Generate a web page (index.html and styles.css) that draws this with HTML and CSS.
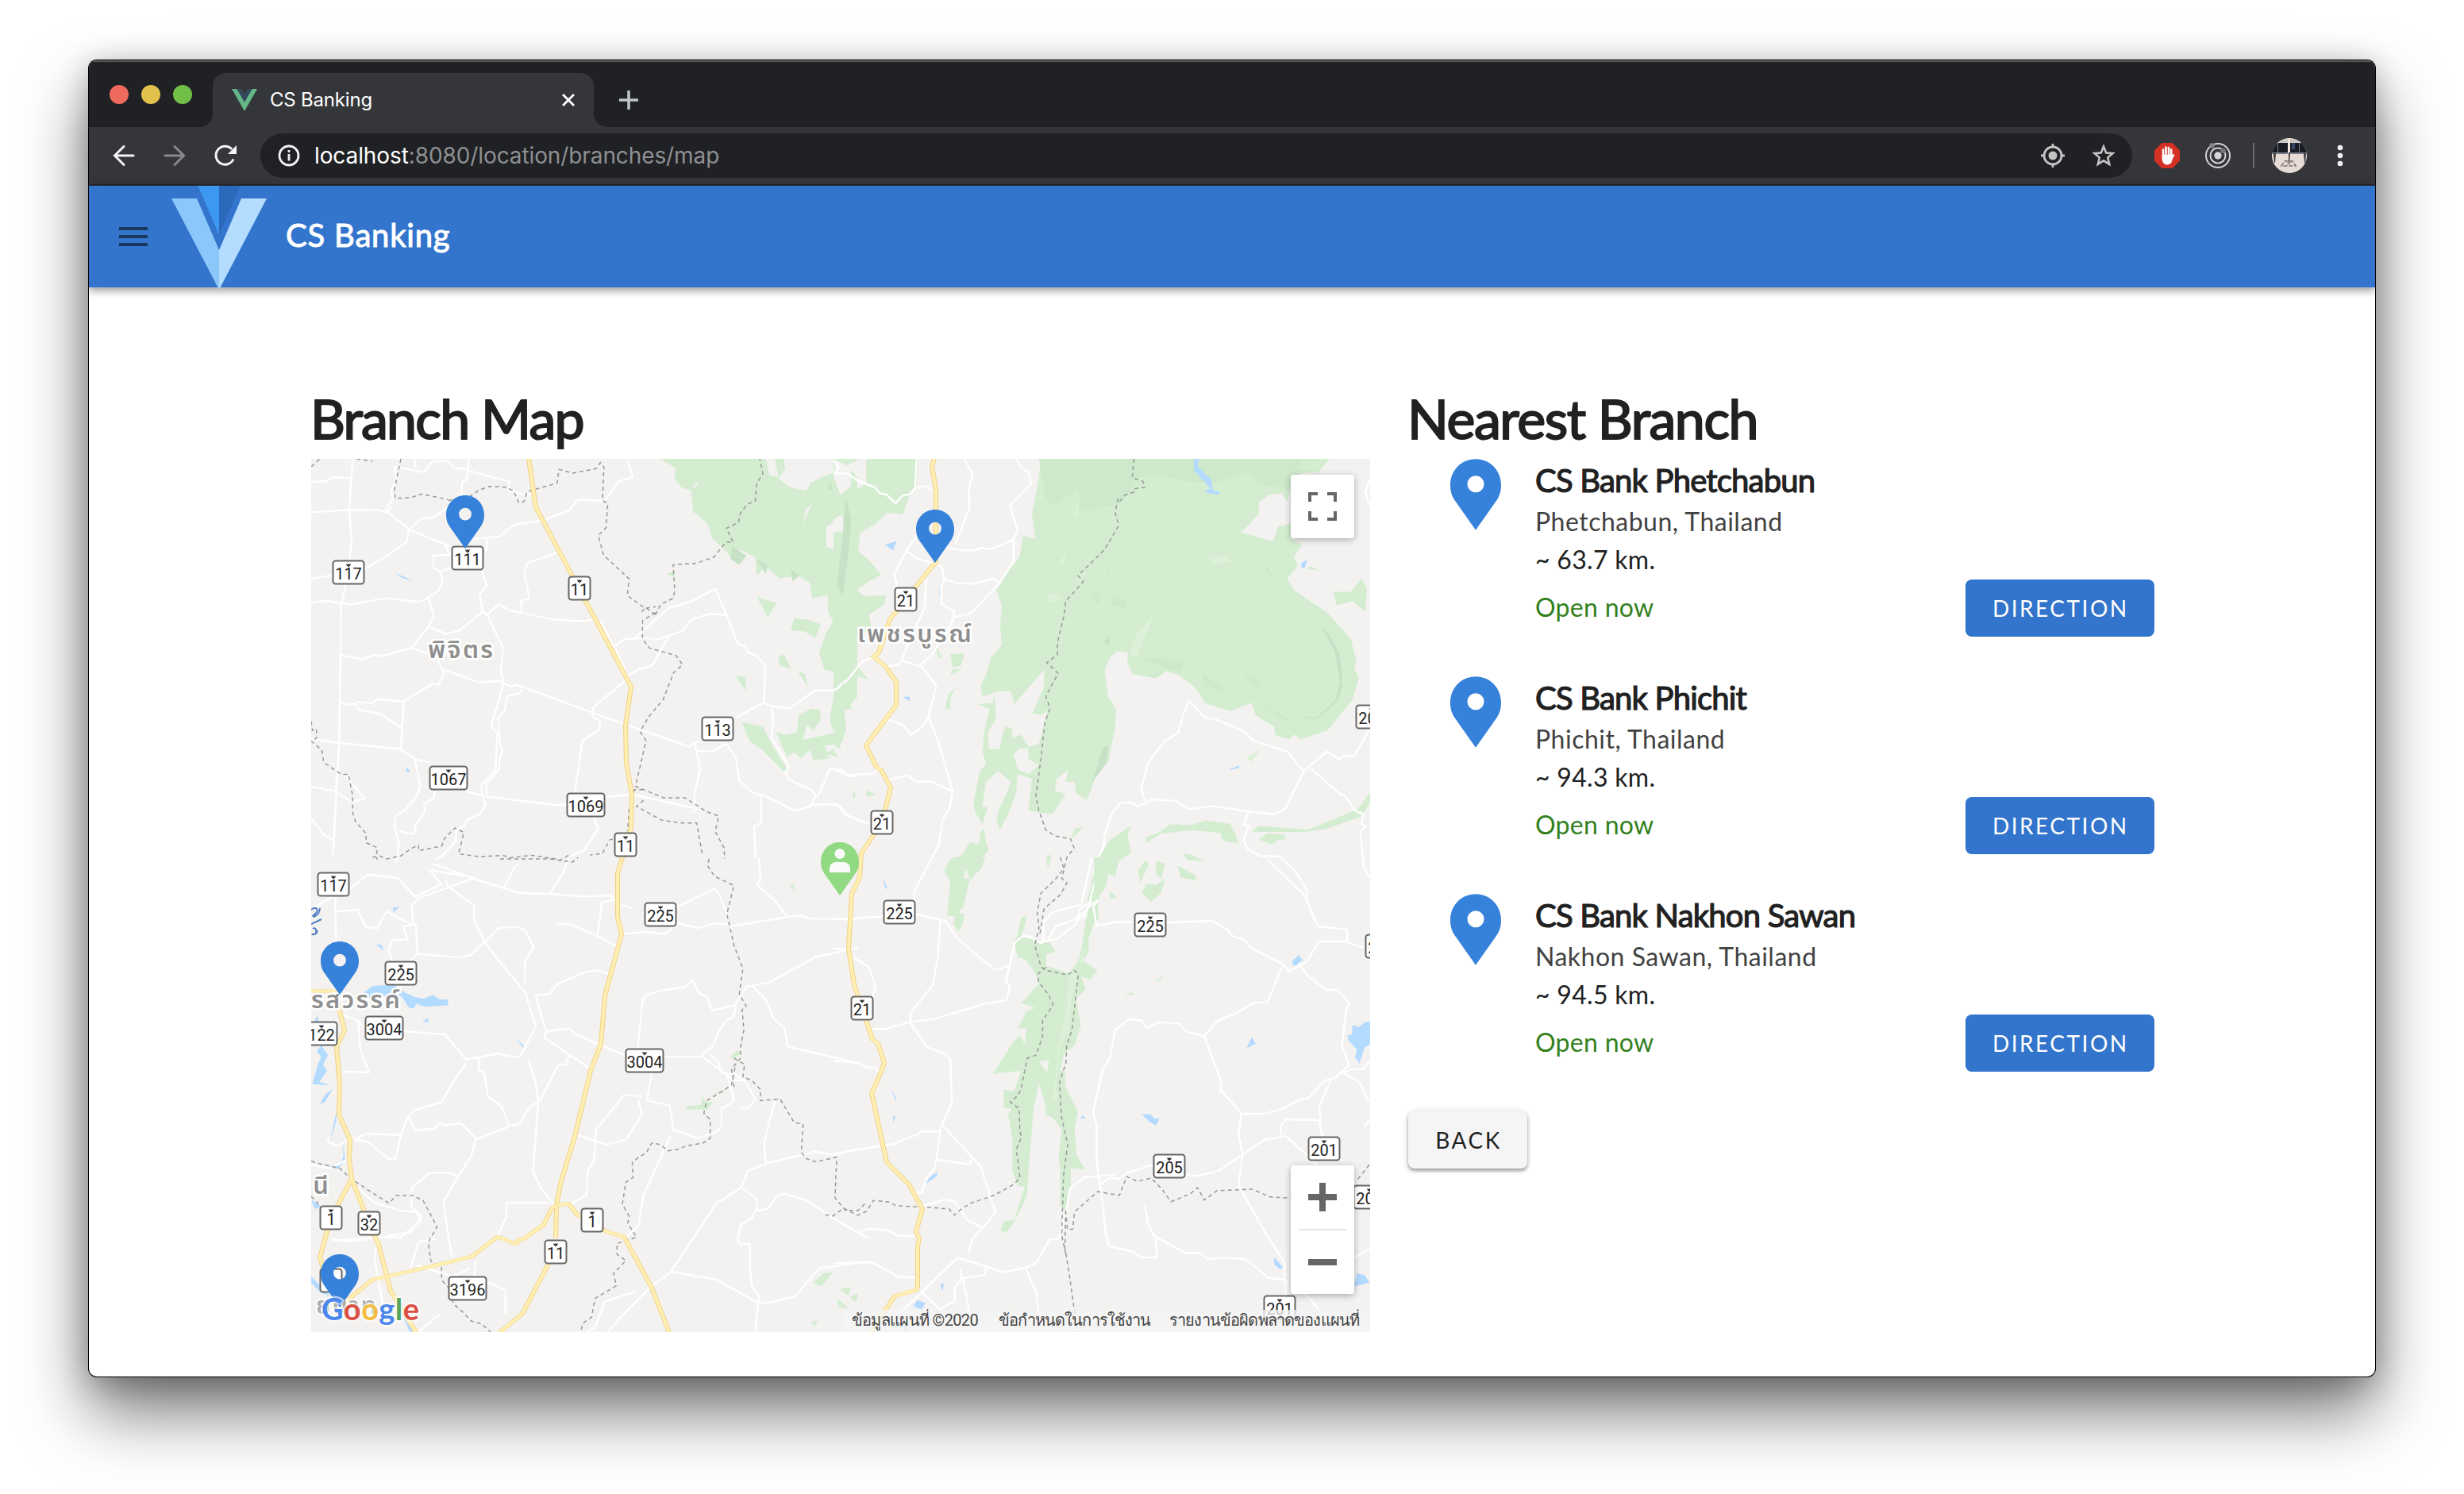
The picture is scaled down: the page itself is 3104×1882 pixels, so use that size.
FILE: index.html
```html
<!DOCTYPE html>
<html lang="en">
<head>
<meta charset="utf-8">
<title>CS Banking</title>
<link rel="stylesheet" href="styles.css">
</head>
<body>
<svg class="defs" aria-hidden="true">
  <symbol id="pin" viewBox="0 0 48 67"><path fill-rule="evenodd" d="M24 0C10.5 0 0 10.6 0 24.5c0 6 1.4 10.300 4.200 14.500L24 67l19.800-28c2.800-4.200 4.200-8.500 4.200-14.500C48 10.600 37.500 0 24 0zm0 15.700a7.900 7.900 0 1 1 0 15.800a7.900 7.900 0 1 1 0-15.800z"/></symbol>
</svg>
<div class="window">
  <div class="tabs">
    <i class="light red"></i><i class="light yellow"></i><i class="light green"></i>
    <div class="tab">
      <svg class="favicon" width="32" height="28" viewBox="0 0 32 28"><path fill="#64b687" d="M0 0h6.500L16 16.500 25.500 0H32L16 28z"/><path fill="#35495e" d="M6.500 0H12l4 7 4-7h5.500L16 16.500z"/></svg>
      <span class="tab-title">CS Banking</span>
      <svg class="tab-close" width="16" height="16" viewBox="0 0 16 16"><path d="M1 1l14 14M15 1L1 15" stroke="#fff" stroke-width="2.800"/></svg>
    </div>
    <svg class="new-tab" width="24" height="24" viewBox="0 0 24 24"><path d="M12 0v24M0 12h24" stroke="#c3c6cb" stroke-width="3.500"/></svg>
  </div>
  <div class="toolbar">
    <svg class="nav-icon" width="32" height="32" viewBox="0 0 32 32"><path d="M28 16H5M16 4.500L4.500 16L16 27.500" fill="none" stroke="#f1f3f4" stroke-width="3" stroke-linecap="round"/></svg>
    <svg class="nav-icon" width="32" height="32" viewBox="0 0 32 32"><path d="M4 16h23M16 4.500L27.500 16L16 27.500" fill="none" stroke="#88898b" stroke-width="3" stroke-linecap="round"/></svg>
    <svg class="nav-icon" width="32" height="32" viewBox="0 0 32 32"><path d="M26 20.500A11.500 11.500 0 1 1 24 8" fill="none" stroke="#f1f3f4" stroke-width="3"/><path d="M30 3v11H19z" fill="#f1f3f4"/></svg>
    <div class="omnibox">
      <svg class="info" width="28" height="28" viewBox="0 0 28 28"><circle cx="14" cy="14" r="12" fill="none" stroke="#f1f3f4" stroke-width="2.800"/><path d="M14 12v8.500M14 7v3" stroke="#f1f3f4" stroke-width="2.800"/></svg>
      <span class="url"><b>localhost</b>:8080/location/branches/map</span>
      <svg class="locate" width="32" height="32" viewBox="0 0 32 32"><circle cx="16" cy="16" r="5.500" fill="#c4c4c4"/><circle cx="16" cy="16" r="11" fill="none" stroke="#c4c4c4" stroke-width="2.800"/><path d="M16 1v5M16 26v5M1 16h5M26 16h5" stroke="#c4c4c4" stroke-width="2.800"/></svg>
      <svg class="star" width="32" height="32" viewBox="0 0 32 32"><path d="M16 4.500l3.200 8 8.400.6-6.400 5.500 2 8.300-7.200-4.500-7.200 4.500 2-8.300-6.400-5.500 8.400-.6z" fill="none" stroke="#c4c4c4" stroke-width="2.600"/></svg>
    </div>
    <svg class="ext" width="32" height="32" viewBox="0 0 32 32"><path d="M9.400 0h13.200L32 9.400v13.200L22.600 32H9.400L0 22.600V9.400z" fill="#d53024"/><path d="M11 20V8.500M14.500 16V5.500M18 16V6M21.200 17V8.500M24 15.500L20.500 22" stroke="#fff" stroke-width="2.600" stroke-linecap="round"/><path d="M9.700 15h12.800v5c0 10-12.800 10-12.800 0z" fill="#fff"/></svg>
    <svg class="ext" width="32" height="32" viewBox="0 0 32 32"><g fill="none" stroke="#d5d6d8" stroke-width="2"><circle cx="16" cy="16" r="15"/><circle cx="16" cy="16" r="9.500"/></g><circle cx="16" cy="16" r="4.700" fill="#d5d6d8"/><circle cx="8.500" cy="3.500" r="3.300" fill="#85868a"/><circle cx="22.500" cy="10" r="3.300" fill="#75767a"/></svg>
    <i class="divider"></i>
    <svg class="avatar" width="44" height="44" viewBox="0 0 44 44"><defs><clipPath id="face"><circle cx="22" cy="22" r="22"/></clipPath></defs><g clip-path="url(#face)"><path fill="#e6dcd5" d="M0 0h44v44H0z"/><path fill="#cdc8c0" d="M0 0h44v6H0z"/><path fill="#191c25" d="M0 6h20v13H0zM23 6h21v13H23z"/><path fill="#777e89" d="M0 18h20v2H0zM23 18h21v2H23zM7 6h1v12H7zM34 6h1v12h-1z"/><path fill="#334768" d="M25 6h4v8h-4z"/><path fill="#efe6df" d="M20 0h3v20h-3z"/><path fill="#343334" d="M2 19h3l-1 12H3zM21 18h2l-1 14h-1zM40 19h3l-1 12h-1z"/><path d="M12 35l4-6h10l4 6z" fill="none" stroke="#77736f" stroke-width="1.500" stroke-dasharray="5 2"/><path d="M18 30l7 5M25 30l-8 5" stroke="#ae8f81"/></g></svg>
    <svg class="dots" width="8" height="28" viewBox="0 0 8 28"><g fill="#f1f3f4"><circle cx="4" cy="4" r="3.300"/><circle cx="4" cy="14" r="3.300"/><circle cx="4" cy="24" r="3.300"/></g></svg>
  </div>
  <header class="appbar">
    <svg class="menu" width="36" height="24" viewBox="0 0 36 24"><path fill="#18385f" d="M0 0h36v4H0zM0 10h36v4H0zM0 20h36v4H0z"/></svg>
    <svg class="logo" width="120" height="132" viewBox="0 0 120 132"><path fill="#3c98f0" d="M33.500 0H60v62z"/><path fill="#2b69bb" d="M60 0h26.500L60 62z"/><path fill="#8cc7fb" d="M0 16h32l28 65v50z"/><path fill="#b3dcff" d="M120 16H88L60 81v50z"/></svg>
    <span class="brand">CS Banking</span>
  </header>
  <main class="page">
    <section class="map-col">
      <h1 class="heading tight">Branch Map</h1>
      <div class="map">
        <svg class="canvas" width="1334" height="1100" viewBox="0 0 1334 1100">
          <g class="nw" transform="translate(-12 -98) scale(.4464 .3827)">
            <path class="forest" d="M1010 256L1055 285 1052 320 1072 350 1098 360 1105 430 1145 470 1160 520 1190 550 1215 585 1240 555 1280 580 1285 640 1310 610 1350 650 1400 640 1435 665 1440 715 1485 705 1485 760 1500 790 1480 830 1460 895 1475 950 1510 960 1500 1040 1490 1120 1500 1150 1520 1100 1568 1040V256zM1030 635l25-10-5 20zM1283 708l20 10 37 12-25 50-10-25zM1380 820l10-40 35 5 40 15-15 45-30-20zM1345 910l15-12 22 52-33-15zM1225 972h28v48zM1400 955l20 10 10 45zM1242 1122l60 15 25 60 45 85-12 2-65-75-30-22zM1338 1155l30 10 30-10 5-55 35-22 25 5 2 30-20 38-20-20-10 50 80-20 40-10-10 40-50 10 15 40-45 8-10-35-25 28-20-20-20 15zM1480 1225l20-15 15 30z"/>
            <path class="land" d="M1310 256h25l10 60-25-6zM1360 256h140v45l-20 10-45 25-10 25-45-10-35-30 20-30zM1540 275l30-15v60zM1440 405l-25 65 8-50zM1480 480l30-25 10 50 25 15-20 45-45-20zM1100 350l26-25-15 25z"/>
            <path class="ridge" d="M1530 360l15 70-10 120 15 90-10 60-20 40-5-160 10-120zM1215 545l40 30-20 30-25-20zM1380 620l25 20-20 20zM1285 590l30 15-5 30zM1490 330l10 30-12-5z"/>
            <path class="water" d="M265 632l20 10 28 16-30-10zM295 1270l12 15-12 3z"/>
            <path class="road" d="M27 332L66 330 93 316 142 320M144 256L134 425 141 520 135 590M125 668L112 732 106 1180 98 1350 88 1568M27 432L134 424 222 425 236 432 255 415M236 424L258 385 252 365 268 320 262 282 345 300 370 265 410 262 432 287 468 290 472 256M318 256l4 30M468 290v30l-15 15-3 55M468 295l118 35v30l40 14 35-5M236 424l68 65 50 25 66 30M304 485l38-35 25 2 45-35M304 485l-8 45-55 45-64 45M177 620L27 652M485 520l72-8 45-40 78-12 75-35 25-35 75 5 40-65 40-15-15-54M525 515l-5 50M400 530l20 42-48 3v40l20 12 48-20M390 625l8 35-12 30-28 23 15 60-15 35 50 25 38-12 65-62-9-55 20-30-14-50M27 730l40-7 75 12 95-20 95 12 26-15M508 750l15 20 33-35 32 20 60 15 60 15 75 5 44-4M524 770l44 108-6 80 8 35M357 810l-47 68-84 28-20-5-35 15-65-15M310 878l70 30 22 55-17 37-15-5-82 60-75-8-15 14-43-5M402 950l98 42 54-5 40 20 5-7 28 8 215 93 250 102 30-18M570 993l-16 67-20 75 18 25-5 120-40 50 2 40M625 1015l-14 15-30 5-8 50-18 23 5 95 7 8-8 35-3 35-35 45v35M509 1365l10 30-16 30-36 20-8 20-22 10-2 40-40 50-18 10M720 565l-85 35-6 40 14 75-23 8v38M845 790l35 85 30-25 60-5 30 7 75-30 23-35 50-20 50 2-30-85-70 42-60 20-98 100M885 880l35 90 32-22 38-12 50-105M925 975L822 1075v30l20 15-2 28-48 35-22 180M1198 764l31 100 22 10 10 20 22 10 25 32-3 122-80 50M1305 1060l20 10 50 8 75-60h60l20-25M1325 1070l6 50-5 55 50 95-12 20 15 25 60 30 12 20-15 35-45 14-93-55M1435 1395l75-3 25 35 33 15M1455 1370l20-50 15-45 35 5 15 20h28M1200 1195l25 45 10 75 32 35 30 15v90l-20 10 4 103M1110 1195l15 80-18 95 8 40-15 10M1117 1218h45l38-25M27 1177l60 12 190 22 45 35 40 10M465 1350l45 16 210 30 30-2M855 1370l75-10 175 45M106 1205l-10 145-69-15M96 1350l45 35 37-10-60-85M320 1245l15 90-10 30-35 50-25 15-2 40 12 55-8 60M375 1350l-2 22-27 20 2 25-30 50 5 10-10 15-38-10M27 1440l36 55 30 18M288 1055l-8 155M112 1057l15 8 25-2 12 20 57 12 60 47M825 1435l12 40-40 70-40 20"/>
            <path class="county" d="M27 282l25-26M155 256l45 8M280 256l-18 100 2 30 44-2 30-12 75 18M413 393l60-12 25-20 30-14 45 2 25 12 15 40 15-5 8-32 85-28 5-45 40 12 65-15 12-20 10 15-4 110 15 10-5 80-22 25 15 65 72 78-5 55 50 42 30-5M960 760l10-15 30 25M998 770l15-35 35-20 5-25-5-85 65-5 50-20 35-50h20l-20-45 35-20 5-30 20-30 22-10 5-60 17-30-17-90M998 762l-36 27v60l20 30 45 15 30 10 18 30-25 25-30 90-40 55-25 50 17 30-30 150 80 38h60l60 45 35 15-10 50 25 55 2 36M964 1345l-25 0-15 65-5 90-50 10-20 45-35 5M965 1380l-20 20 70 45 60 10h40l15 100M27 1120l3 30 12-5v30l-15 10 30 30 5 40 50 40 20 0 12 70v55l8 30 30 40v30l30 15v40M200 1568l20-5 20 10 40-10 30-25 20-10v18l65-15 8-25 30-35 25 15-15 70 60 10 65-5 20 8 60-8 70 12 10 5 30-20"/>
          </g>
          <g class="ne" transform="translate(658 -18) scale(.4464 .3827)">
            <path class="forest" d="M92 47H240L235 130 215 165 195 230 150 225 120 260 75 290 70 350 100 380 135 430 100 450 65 480 90 500 150 495 140 530 100 560 110 620 60 610 45 650 70 690 20 700 60 720 100 775 60 760 60 830 20 810 0 850V70L30 140 60 150 92 130zM5 850l35-10 15 30-25 5 5 50 0 20-30 15-5-50zM0 950l15-10 5 60-15-5z"/>
            <path class="forest" d="M585 47H1400L1370 90 1320 95 1290 130 1280 190 1265 160 1230 165 1200 190 1200 230 1150 290 1185 300 1240 320 1255 270 1290 260 1290 310 1322 330 1300 370 1310 400 1280 440 1300 480 1390 550 1430 600 1460 640 1475 710 1470 740 1483 765 1465 840 1440 875 1395 940 1320 970 1300 955 1285 970 1245 955V930L1190 890 1180 850 1120 878 1050 852 1020 800 975 760 940 745 910 770 845 755 830 720V683L800 680 780 700 765 745 775 830 797 870 795 930 775 1045 745 1060 735 1110 715 1170 685 1150 680 1110 655 1110 662 1070 630 1100 625 1140 655 1150 620 1215 600 1215 550 1205 560 1100 520 1085 515 1150 495 1210 470 1270 460 1240 465 1205 490 1145 500 1110 465 1075 430 1110 420 1190 435 1195 420 1250 400 1210 395 1180 412 1080 430 1050 420 1010 440 870 405 855 450 850 455 815 420 830 415 795 430 760 445 700 475 660 470 600 475 530 460 480 490 420 525 370 535 300 570 310 560 230 578 120zM440 870l20 10-15 80-25 15zM1410 485l50 0 30-45 15 35-5 75-35-35-45 15zM1345 400l27 15-35-5zM330 690l40-2-10 40-25 5zM335 740l25 0-30 20zM345 800l-20 20-10 45 15 10v-45zM290 660l15 40-10 5zM55 1130l8 30-8 5zM92 1138l30 15-30 6zM385 1310l25 5 5-40 10-10 5 40 8 30-28 35-15 55-30 20-10 110-35-5 10-110-18-40 22-40 25-5zM600 1355l15-5-10 50zM670 1300l10-35 25-5-25 30zM1480 1200l35-55v30l-25 50-100 40-60 10-150 0 20-20 140 12zM880 1295l40-20 30-25 60 2 40-15 70 12 15 35 8 30-45-10-5-25-80-10-90 12-40 30zM1200 1300l25-20 50 5 0 15-20 2-20 15zM780 1300l60-45-10 30 10 60-35 25-10 50-30-10-15 80-5 25-30-5 25-130zM860 1400l20-30 10 10-25 65zM910 1370l25 10-10 50-15-20zM985 1345l25 5 38 22-50-5zM970 1385l55 35-5 15-40-10zM870 1475l15-30 25 5 25-20-10 45-30 30zM780 1495v-25l20 20zM340 1500l25 0-5 30-20 0zM530 1560l15-10-5 18z"/>
            <path class="land" d="M500 870l60 15 25 5 20-15-25 110-30 10-20-40-25 10zM455 815l45-5 10 45 45-60 40-55-2 60-30 80-65 55-40-35zM435 950l30-60 30 10-20 60-5 40-30 5zM525 1000l25 0 0 35 30 20-30 30-30-15-12-50zM0 245l25-15 5 55-30 5zM5 50l45 25 0 60-30 30-20-60z"/>
            <path class="shade" d="M580 47H1320L1300 150 1200 130 1170 90 1080 125 980 120 930 100 860 110 820 180 800 200 740 210 700 220 690 150 620 200 600 180zM870 700l125 10-15 40-60-20zM1040 755l60 45-5 15-45-20zM1155 755l50 20-10 30zM1215 855l70 50-10 5-60-50zM1215 390l40 60-35-30zM770 420l10-10-5 30zM785 500l40 10-5 30-35-10zM725 500l30-15-5 40z"/>
            <path class="ridge" d="M1375 595l30 40 25 60 7 100-15 50-60 60-55-15 55 10 55-60 12-60-15-100zM35 170l15 80-10 130-15 120-15-40 15-150zM760 1000l15-10-5 60-40 60zM765 650l10-20 5 35z"/>
            <path class="light-green" d="M905 560l-50 140-20-15 20-60zM695 420l20 0-35 50zM655 350l-15 40 10 5zM600 500l30-10 15 15-30 15zM1055 370l55 0 20 15-50 10zM1165 1030l40-25-25 40zM690 170v70l-8-5z"/>
            <path class="water" d="M1017 47h15l-5 25 40 45 2 33 20 5v10l-30-5-15-5 20-10-47-60zM145 330l33-12-10 30zM1320 390l18-12-10 30-8-5zM195 830l20 0 0 15zM1118 1068l27-12 0 8-25 7zM300 465l5 0-7 40zM140 1430l12 35-5-5z"/>
            <path class="road" d="M0 95l40 0 30 25 45 20 15 20 20 5 25 28 20-25 20-5 15-20 5-96M0 50l15 25-10 20M235 140l25-3 22 15M370 47l22 50-10 50 2 60-10 30-30 90M515 47l20 35 15 8 8 40-60 70 22 85-15 30-60 30-30-5-15 8h-40l-45-10M508 310v75l-20 35-22 40-80 97-45 10-10 15M315 445l30 10 50 4 55-18 15 10M285 390l20 10 8 45-10 25 3 55 35 25-5 35-60 110-30 30v10M262 440l-5 100-40 95-25 75M205 350l30 25 45 15M235 300l-30 50-33 75 8 45M190 710l60 22 40 63-22 100 30 90 38 155-8 55-20 40-10 80-70 155 2 105M150 730l35-5 8-15M155 905l42 20 22 30 30-25 20-35M0 1068l12 5 28 15 70-5 15-12M155 1103l55-14 20 20h45l60 32M0 1187h15l30 38 60 25M0 810l15-10 5-10 20-15 40-60 20-10 15 0M1004 843l-17 45-14 60-40 30-45 70-20 85 12 42M1004 843l44 57 32 5 80 40 25 30 95 35 47 65 65-65 34 25 15-10h28l45-90M1347 1067l25 25 60 60 12 5 25 45 20 15M1327 1077l-25 55-25 65-35 20-75-10-100-17-65 10-35-27-70-5-20 15-20 7-18-12-30 2-25 40-20 70v25l-30 85 5 30-17 80-8 38-12 7-75 30-20 45M1172 1207l-15 45 15 5-15 45 12 30 35 22 55 2 45 50 32 60v30l20 70M1480 1210l15 5-5 35 12 5-15 20 10 120 17 30M1513 115l-12 40 10 45M690 1568l5-40 20-15 25-12-12 25 10 42"/>
            <path class="county" d="M848 47l-5 62 30 12 5 20-30 5 0 10-25 10-15 20-5-10-8 50 10 40-40 80-75 85 15 20-15 20-35 45-5 50-18 85 0 40-30 27 32 35-35 75 12 40-15 50-10 110-15 130 8 45 20 65 25 20 45 10 10 30-20 30-15 70 15 15-20 40-45 45-12 85"/>
          </g>
          <g class="sw" transform="translate(-12 502) scale(.4464 .3954)">
            <path class="forest" d="M1378 88l10-5 3 28zM1208 640l20-25 12 5-15 20zM1160 755l30-15 5 8zM1080 803l10-10 38-5 3-25 10 15 20 3-15 22zM1443 1355l30-30 25-3-10 15-20 30zM1518 1377l30-5-5 25zM1510 1405l30 32-25-5zM1555 1405l13-5v15zM1437 1480l20-5-10 20z"/>
            <path class="water" d="M170 435l30-25 60-5 30 25 30 15 25 5 25-12 20 15 23 0v18l-65 5-25-10-5 15-15-2-20-35-25-5-70 10zM258 160l18-2-18 18zM210 278l15 0 7 20zM340 522l17-10v14zM604 578l20 18 4 14zM55 600l20 30-15 30 12 20-22 35 30 12-50-5 15-60 10-25-12-20zM87 738l-20 40-16 10 15-32zM98 808l0 30-18 70zM35 520l12-15 0 20zM115 905l8 60-20 27-45-5 50-5 10-30zM27 1090l30 25-20 5zM27 1335l55 65-30-15-25-30zM285 1460l30 50-10 2z"/>
            <path class="road" d="M27 165l60-40 10-60M95 125v50l2 95M97 172l60-5 25 55 30 5 28-55 40 25 40 20M125 110l60-55 85 10 50 60 75-40-35-45 130 25-160 65-20 25 5 60-30 5 15 40-45 5-10 30 10 35 45 30M322 210l5 95-25 30M327 307l115 12 35-8 25-25 53-60 50-5 25 10 25 55-25 45v70M405 70l10 25 73 60-2 40 30 75 70 100 45 60 30 110-47 98-60-12-90 18-60-80-120-10M370 20l120 50 80 28 40 15 100 4 85 8 75-3 30 30 35 10M570 98l30-65 12-10M700 115l35-60 20-55M835 250l12-105 40-12M1055 160l110-60 15 20 24 75M1060 210l60 15 50-15 37 5M900 245l75-8 50 8 40-40M1207 220l165-30 35-5 30 10 130 3M1290 0l5 70-10 18 50 50 35 50M660 440l40-5 20-30 80-40 30-5 35 10M660 440l30 115-5 20 125 95M690 555l65-10 20 20 135 65M720 210l40 5 75 35 55 35M1020 635h110l90 75 30 0 30 60-20 30h-20M1130 628l30-25 15-45 25-40 20-10 5-40 10-20 20-35 65-15 130-80 120-30M1225 470l-65 18-18-45-20-10-20-40-20 20-60 10-50 15-10 20-15 170M1272 408l40 50 20 55 30 30 10 60 190 50M1155 630l20 20 10 35 35 5 30 20M1200 690l20 80-10 15-25 15v55l-15 20-55 20-30-15-35-10-12-80-63-15 12-90M960 762l-50-5-35 50-45 60-5 100-17 30-5 80-30 20-25 10M950 775l10 40-10 25-35 60-55 15-80-30M1040 890l-75 185-15 100-50 50M1310 975l115-30 20-8 60 12 63-20M1310 975l-5-65 30-135M1310 978l-50 20-18 50-22 20-50 35-130 220-55 45-95 110-50 70M1240 1050l45 40 0 35 30-5 30-45 20-2 60 20 80 60 93 60M1285 1115l-15 35-30 20-10 50 10 15 25-5v70l5 65 20 35-10 100 20 35M1045 1320l125 25 110 70 30 5 80-20 70-90 100-17M940 1385l-85 30-25 80-25 17M755 630l-10 30-20 0-50 110-35 30-25 50-30 5-20-60-40-35-10-75-15-5v-45M585 858l-90 40-45-50-50 5-10-8-18 20-52 5-20-45 20-20 75-25 30-60 40-65M300 825l-20 60-15 75-20 0-60-55-35-5 30-20 105 5M145 895l-25 10M640 645l20 70 8 60-15 225 20 50 45 65M490 898l-10 50-55 100-25 50M445 1020l-25-15-60 0-50 50v60l30 30-35 50-65 10M578 1145l0-45 120 0M578 1145l-25 60M490 1285l-5 90M425 1275l-10-60-15-115M380 1215l-50 10-15 55-10 30M110 500l50 20 10 15M160 520l5 90 25 75-75-2M325 1300l100 35 50-25M480 1350l50 5 45 25 0 75M390 1455l-60 55M27 980l55 10 50-30M78 890l-5 15 30 15 15-10M145 1040l60 60 70 25 50 5 10 30-55 50-60 0-110 10M85 1218l50 5 50-5M215 1225l-10 50 10 60 15 100-10 50"/>
            <path class="county" d="M560 5h70l45 0 25 0 65 10 15-15M27 968l30 10 50 12 30 32 60 45 50 35 20-25 45 0 30 15 40 85-25 50 8 60 30 20v40l25 30 8 45 30 30 20 25 30 10 25 25M27 1080l25 30M1150 5l-5 20 20 35 55 30-20 90 20 100 25 75-10 80 20 40-12 10 5 65-10 60v30l-25 35 8 60M1220 640l30 20-5 40 25 10 25 30v35l55-5 40 75 25 5-5 90 15 20 25 10 60-15-5 130 30 40 35 0 23-25M1223 670l-10 55-25 20-45 30-8 40 18 20v60l-20 15-50 10-20 10-30 5-20-20-25-5-15 30-40 30 2 50-20 15-10 70 20 40-5 20 25 45-55 20 0 35 25 20-35 40 8 40-60 40-10 60-25 20-8 40"/>
          </g>
          <g class="se" transform="translate(658 502) scale(.4464 .3954)">
            <path class="forest" d="M345 0H430L415 40 385 65 365 165H335L345 80 327 65 335 30zM345 180l25 0-5 30-12 27-15-25zM530 190l15 10-15 50-15 15zM510 265L530 250 580 270 610 270 627 300 600 310 600 345 665 370 690 330 700 290 712 200 720 160 735 130 735 0H780L770 90 745 130 748 200 735 210 720 260 720 300 705 330 745 360 725 390 700 380 712 420 685 450 698 535 680 600 650 625 640 680 652 680 655 730 690 810 680 860 685 945 710 995 670 990 670 1050 655 1125 640 1110 640 1000 635 950 645 870 620 830 600 820 580 720 565 800 555 930 545 1080 520 1140 490 1195 470 1190 480 1160 510 1155 540 1050 520 1045 505 1000 505 900 495 830 490 820 505 800 480 800 480 740 510 745 530 680 450 690 500 600 525 565 540 595 545 545 520 545 545 490 570 480 530 465 580 400 565 360 540 325 520 320zM905 395l28-20-15 20zM820 440l20-10 10 7zM18 1375l25-5-5 20zM45 1400l25-10-10 25zM12 1405l30 32-25-5zM490 1450l8-12 5 12z"/>
            <path class="land" d="M365 65l10-30 10 35zM580 650l28-5-5 40zM580 720l25 90-8-15-20-50z"/>
            <path class="light-green" d="M665 370l28 0-20 70-10 110-25 60-10 130 5 30-15 10 20-200 20-100zM690 330l20-50-5 60z"/>
            <path class="water" d="M140 65l12 35-7-5zM1295 330l18-18 11 15-18 18-10-3zM1180 572l11 22-25 14zM1452 565l12 0 0-30 20 5 15-15h15v70l-15 10-15 52-12-20 5-25-25-30zM870 818l25 0 10 15h15l-10 22-18-12zM697 832l5-10 10 10zM160 735l18 35-3 5zM168 825l8-2-8 22zM292 1003v12l-32 26 10-20zM1242 1272l27 35-10 5-15-15zM1478 1325l20 5 15 25-45 12zM302 1360l10-2-5 25zM225 1430l12-20 22 10-10 20zM185 1490l25-5-5 25z"/>
            <path class="road" d="M0 198l140-10M230 180l85 22 38 60 100 95 15 0 25-12M302 202l-8 120-14 85-60 85-5 33M0 291h40M50 315l50 35 18 60-12 60 0 15M110 547l35 0 70-22 68-10 150-50 55-10 10-45-12-12 25-125 20-20 15-2 12 5 32 20M215 525l50 80 50 20 15 20 4 140-28 65M305 850l110 135 42 145-20 30-45 55-12 50M305 873h-57l-10 12-15 2-50 26-35 5-130 25H0M303 855l-13 108 95 15 5-15M290 963l-5 25-25 40-10 40-15 0 15 50M255 1110l60-20 27 5 35 60 43 25M0 648l70 7 25 15 25 0 10 15M0 1150l65 43 40-10 45 5 35 18h45M0 1293l108-3 77 48h50M190 1450l160-175 130 47 62-15 30-15 38-75 25-2 22-90 10-70 40-35 90-10M542 1307l30 80 10 80M432 1300l-5 30-65 12-5-30M362 1342l-20 30 0 40-40 28M365 1345l22 120M250 1385l50 55M593 265v-60l25-30 82-25 20-105 10-45M580 272l50-12 40-35 15-12 5-30 15-5 20-25 20-15-12 20 10 60 55-12 60 0 60-4M940 208l60-3 70-2 45 30 5 15 40 15 25 30 80 45 20 25 50-30 35-65 80 0v-38l-82-10-40-100-72-80-30-30M1450 270l35 15 30 0M1265 350l-40 110-40 5-55 35-45 20-40 50-50-15-20-25-60-5-30 20-15-25-35-5-40 35-15 90-20 35-15 75-12 60 10 50 0 110 15 120 10 110 10 40 65 15 25 20h45l-5-65-20-40-10-60M750 1045l30-25 25 5 25-20 70-25M990 1010l35 5 60-15 130-100 60-12 85 85M1155 945l-12 100 15 30 60 120 55 95 0 75M1155 945l-12-60 8-70-60-75 5-20-20-60-30-90M1155 817l60 0 50-15 50-30 25-5 45-55 30-10 40-40-20-65 12-110 10-20-35-45-30 0-50-40-30-45M1435 685l30-10 30 0 20-30M1440 687l45 30 25 60M1375 845l-5-50 35-90M1370 837l-95-2-12 20v30M1370 837l20 110M1280 890l85 90M1272 1345l-45-5-25-25-40-35-60-5-45 5-25-20-40 0-65-40-30-20M1330 1390l40 50M1470 1275l44-28M1497 860l17-25M1280 1345l-5 50"/>
            <path class="county" d="M640 0l10 35-20 30-45 50-10 60 5 50-12 55 18 70 15 10 60 15 18-15 12 10-18 180-15 50-2 55-18 60 5 110 18 90-12 100-5 190 12 60M600 350l-22 20 0 25 30 45 12 30-30 50 0 50-18 60-25 10-18 100-10 20-20 20 25 20 2 75 5 15-15 40 10 90-15 20-30 20-35 20-55 20-30 20-20 20-15-20-60-5-90-5-18-12-45-5-20 35-25 12-40-22-30 25-25-5M655 1125l5 60 15 0 5-55 35-35 30-30 62 12 20-60 30 15 40-10 30 35 25 40 55-25 20-20 20 40 35-30 100-5 50 25 75 5M1480 1025l35-50M655 1125l-2 120 12 80 15 120 10 80"/>
          </g>
          <g class="highways">
            <path d="M274 0L283 61 403 287 396 336 397 384 404 422 403 465 396 486 392 502 386 522V577L391 599 370 676 365 737 352 771 332 854 314 913 309 941 308 982"/>
            <path d="M785 0L782 9 787 39V131L781 137 749 177 729 202 715 244 708 249 723 261 737 281V310L699 361 712 388 718 392 730 414 719 458 693 497 691 527 681 548 677 617 684 662 707 731 714 737 722 761 716 777 706 799 725 886 753 914 770 945 762 974 766 982 764 992V1042L762 1047 735 1055 716 1083 705 1100"/>
            <path d="M0 670L30 671 35 692 42 720 32 741 36 789 35 826 49 858 48 882 51 907 25 956 11 1006 19 1036M51 907L73 963 85 990 100 1048 132 1100"/>
            <path d="M37 1067L77 1034 144 1019 202 1005 235 980 258 989 261 984 267 983 293 965 303 944 309 941 324 938 336 953 354 959 371 973 394 980 428 1042 451 1100M308 990L300 1012 266 1077 238 1100"/>
          </g>
          <g class="places" text-anchor="middle">
            <text x="188" y="251" textLength="82">พิจิตร</text>
            <text x="760" y="231" textLength="144">เพชรบูรณ์</text>
            <text x="56" y="692" textLength="112">รสวรรค์</text>
            <text x="12" y="926">นี</text>
            <text x="44" y="1077" textLength="76" class="faded">ยนาท</text>
          </g>
          <path fill="none" stroke="#4d7cc0" stroke-width="2" d="M0 568c8-6 10 2 4 6s6 4 7-8M0 586l13-6M2 592c5-4 6 8 1 7s3 3 5-5"/>
          <g class="shields" id="shields"></g>
          <rect x="671" y="1072" width="663" height="28" fill="#f5f5f5" opacity=".78"/>
          <g class="legal">
            <text x="680" y="1092" textLength="160">ข้อมูลแผนที่ ©2020</text>
            <text x="865" y="1092" textLength="192">ข้อกำหนดในการใช้งาน</text>
            <text x="1081" y="1092" textLength="240">รายงานข้อผิดพลาดของแผนที่</text>
          </g>
          <g fill="#3682db"><use href="#pin" x="170" y="46" width="48" height="67"/><use href="#pin" x="762" y="64" width="48" height="67"/><use href="#pin" x="12" y="608" width="48" height="67"/><use href="#pin" x="12" y="1002" width="48" height="67"/></g>
          <g transform="translate(642 483)"><path fill="#91d982" d="M24 0C10.500 0 0 10.600 0 24.500c0 6 1.400 10.300 4.200 14.500L24 67l19.800-28c2.800-4.200 4.200-8.500 4.200-14.500C48 10.600 37.500 0 24 0z"/><circle cx="24" cy="14.500" r="6.500" fill="#fafafa"/><path fill="#fafafa" d="M11 38v-5c0-5 4-8 8-8h10c4 0 8 3 8 8v5z"/></g>
          <text class="google" x="13" y="1085" textLength="123"><tspan fill="#4c87ee">G</tspan><tspan fill="#dc5044">o</tspan><tspan fill="#f4bd41">o</tspan><tspan fill="#4c87ee">g</tspan><tspan fill="#56a55c">l</tspan><tspan fill="#dc5044">e</tspan></text>
        </svg>
        <div class="control full"><svg width="36" height="36" viewBox="0 0 36 36"><path fill="none" stroke="#666" stroke-width="4" d="M2 12V2h10M24 2h10v10M34 24v10H24M12 34H2V24"/></svg></div>
        <div class="control zoom"><svg width="80" height="162" viewBox="0 0 80 162"><path fill="#666" d="M22 36h14V22h8v14h14v8H44v14h-8V44H22zM22 118h36v8H22z"/><path fill="#e6e6e6" d="M10 80h60v2H10z"/></svg></div>
      </div>
    </section>
    <section class="list-col">
      <h1 class="heading">Nearest Branch</h1>
      <article class="branch"><svg class="branch-pin" width="64" height="90"><use href="#pin"/></svg><div class="info-col"><h2>CS Bank Phetchabun</h2><p class="place">Phetchabun, Thailand</p><p class="dist">~ 63.7 km.</p><p class="open">Open now</p></div><button class="btn primary">DIRECTION</button></article>
      <article class="branch"><svg class="branch-pin" width="64" height="90"><use href="#pin"/></svg><div class="info-col"><h2>CS Bank Phichit</h2><p class="place">Phichit, Thailand</p><p class="dist">~ 94.3 km.</p><p class="open">Open now</p></div><button class="btn primary">DIRECTION</button></article>
      <article class="branch"><svg class="branch-pin" width="64" height="90"><use href="#pin"/></svg><div class="info-col"><h2>CS Bank Nakhon Sawan</h2><p class="place">Nakhon Sawan, Thailand</p><p class="dist">~ 94.5 km.</p><p class="open">Open now</p></div><button class="btn primary">DIRECTION</button></article>
      <button class="btn back">BACK</button>
    </section>
  </main>
</div>
<script src="map.js"></script>
</body>
</html>
```
FILE: map.js
```js
// Route shields: number, then the centre point on the map canvas.
const shields = [
  ["111",197,125],["117",47,143],["11",338,163],["113",512,340],["1067",173,402],["1069",346,436],["11",396,486],
  ["117",28,536],["225",440,574],["225",113,648],["3004",92,717],["122",13,724],["3004",420,758],["1",25,956],
  ["32",73,963],["1",354,959],["11",308,999],["3196",197,1045],["1",25,1035],["21",749,177],["21",719,458],
  ["201",1336,325],["225",741,571],["225",1057,587],["21",694,692],["201",1276,869],["205",1081,891],
  ["201",1333,930],["225",1348,614],["201",1220,1069]
];
const widths = { 1: 27, 2: 27, 3: 39, 4: 47 };
document.getElementById("shields").innerHTML = shields.map(([n, x, y]) => {
  const w = widths[n.length];
  return `<g transform="translate(${x} ${y})"><rect x="${-w / 2}" y="-14.500" width="${w}" height="29" rx="3.500"/>` +
    `<path d="M-3-11l2 1 1-1 1 1 2-1-1 3h-1l-1 2-1-2h-1z"/><text y="9">${n}</text></g>`;
}).join("");
```
FILE: styles.css
```css
* { box-sizing: border-box; }
body { margin: 0; padding: 76px 112px 0; height: 1882px; background: #fff; overflow: hidden; font-family: Lato, "Open Sans", sans-serif; color: #212121; }
h1, h2, p { margin: 0; font-weight: 400; }
svg { display: block; flex: none; }
.defs { position: absolute; width: 0; height: 0; }
.window { width: 2880px; height: 1658px; border-radius: 10px; background: #fff; box-shadow: 0 0 0 1px #000, 0 44px 84px rgba(0,0,0,.55), 0 6px 36px rgba(0,0,0,.25); overflow: hidden; }
.tabs { height: 84px; display: flex; align-items: flex-start; background: #202124; padding-left: 26px; border-top: 2px solid #5a5d5d; }
.light { width: 24px; height: 24px; border-radius: 50%; margin: 29px 16px 0 0; }
.red { background: #ee6a5e; }
.yellow { background: #e0c14e; }
.green { background: #72bf48; }
.tab { position: relative; width: 480px; height: 68px; margin: 14px 0 0 10px; background: #35363a; border-radius: 16px 16px 0 0; display: flex; align-items: center; padding: 0 24px; }
.tab::before, .tab::after { content: ""; position: absolute; bottom: 0; width: 16px; height: 16px; }
.tab::before { left: -16px; background: radial-gradient(circle at 0 0, transparent 15.5px, #35363a 16px); }
.tab::after { right: -16px; background: radial-gradient(circle at 100% 0, transparent 15.5px, #35363a 16px); }
.tab-title { font: 24px Inter, sans-serif; letter-spacing: -.2px; color: #fff; margin-left: 16px; padding-bottom: 1px; flex: 1; }
.new-tab { margin: 36px 0 0 32px; }
.toolbar { height: 74px; background: #35363a; border-bottom: 2px solid #27282b; display: flex; align-items: center; padding-left: 28px; }
.nav-icon { margin-right: 32px; }
.omnibox { width: 2358px; height: 56px; border-radius: 28px; background: #202124; margin-left: -4px; display: flex; align-items: center; padding: 0 20px 0 22px; }
.url { font: 28px Inter, sans-serif; letter-spacing: -.1px; color: #8e9093; margin-left: 18px; flex: 1; }
.url b { font-weight: 400; color: #fff; }
.star { margin-left: 32px; }
.ext { margin-left: 28px; }
.ext + .ext { margin-left: 32px; }
.divider { width: 2px; height: 32px; background: #68696c; margin-left: 28px; }
.avatar { margin-left: 22px; }
.dots { margin-left: 38px; }
.appbar { position: relative; height: 128px; background: #3375cc; display: flex; align-items: center; padding-left: 38px; box-shadow: 0 4px 10px rgba(0,0,0,.4); }
.logo { margin-left: 30px; align-self: flex-start; }
.brand { margin-left: 24px; padding-bottom: 4px; font-size: 40px; letter-spacing: .8px; -webkit-text-stroke: 1px; color: #fff; }
.page { display: flex; padding: 122px 0 0 280px; }
.map-col { width: 1334px; }
.list-col { width: 940px; margin-left: 48px; }
.heading { height: 94px; line-height: 86px; margin-left: -1px; font-size: 68px; letter-spacing: -1.4px; -webkit-text-stroke: 2px; white-space: nowrap; }
.heading.tight { letter-spacing: -1.7px; }
.map { position: relative; width: 1334px; height: 1100px; background: #f3f2f0; overflow: hidden; }
.forest { fill: #d4edd1; }
.land { fill: #f3f2f0; }
.shade { fill: #cee8cc; }
.ridge { fill: #c7e1c6; }
.light-green { fill: #dcf1d8; }
.water { fill: #b3daff; }
.road, .county { fill: none; vector-effect: non-scaling-stroke; stroke-linejoin: round; }
.road { stroke: #fff; stroke-width: 2.4; }
.county { stroke: #999; stroke-width: 1.5; stroke-dasharray: 5 4; }
.highways path { fill: none; stroke: #ffefb3; stroke-width: 4; stroke-linejoin: round; filter: drop-shadow(1px 0 0 #f0d084) drop-shadow(-1px 0 0 #f0d084); }
.places text { font: 600 31px "Noto Sans Thai", "Noto Sans", sans-serif; fill: #8f8f8f; stroke: #fff; stroke-width: 5; paint-order: stroke; }
.places .faded { opacity: .7; }
.shields rect { fill: #fff; stroke: #666; stroke-width: 2; }
.shields path { fill: #333; }
.shields text { font: 20px Roboto, sans-serif; fill: #222; text-anchor: middle; }
.legal text { font: 20px Roboto, sans-serif; fill: #444; }
.google { font: 700 38px Lato, sans-serif; stroke: #fff; stroke-opacity: .6; stroke-width: 5; paint-order: stroke; }
.control { position: absolute; right: 20px; width: 80px; background: #fff; border-radius: 4px; box-shadow: 0 2px 8px rgba(0,0,0,.3); display: grid; place-items: center; }
.full { top: 20px; height: 80px; }
.zoom { top: 890px; height: 162px; }
.branch { height: 274px; padding-left: 53px; display: flex; }
.branch-pin { fill: #3682db; }
.info-col { width: 543px; margin-left: 43px; padding-top: 1px; white-space: nowrap; }
h2 { font-size: 40px; line-height: 52px; letter-spacing: -.8px; -webkit-text-stroke: 1.2px; }
.place, .dist, .open { font-size: 32px; line-height: 48px; letter-spacing: .3px; }
.place { margin-top: 2px; letter-spacing: .5px; color: #424242; }
.open { margin-top: 12px; color: #338020; }
.btn { height: 72px; border: 0; border-radius: 8px; font: 28px Lato, sans-serif; letter-spacing: 2.5px; padding: 0 0 0 2px; }
.primary { width: 239px; background: #3375cc; color: #fff; margin-top: 152px; }
.back { width: 150px; background: #f5f5f5; color: #212121; box-shadow: 0 3px 4px rgba(0,0,0,.35), 0 0 8px rgba(0,0,0,.12); }
```
